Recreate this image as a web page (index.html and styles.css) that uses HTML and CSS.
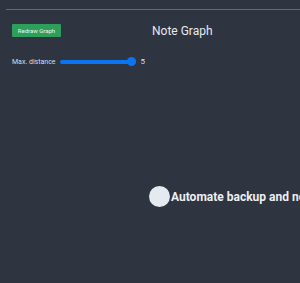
FILE: index.html
```html
<!DOCTYPE html>
<html>
<head>
<meta charset="utf-8">
<link rel="stylesheet" href="styles.css">
</head>
<body>
<div class="rule"></div>
<div class="header">
  <button class="redraw">Redraw Graph</button>
  <h1 class="title">Note Graph</h1>
</div>
<div class="controls">
  <label class="label">Max. distance</label>
  <div class="slider"><div class="track"></div><div class="thumb"></div></div>
  <span class="value">5</span>
</div>
<div class="canvas">
  <div class="node">
    <div class="dot"></div>
    <span class="node-label">Automate backup and notes sync</span>
  </div>
</div>
</body>
</html>
```
FILE: styles.css
```css
html, body {
  margin: 0;
  padding: 0;
  background: #2e3440;
  height: 283px;
  overflow: hidden;
  font-family: Roboto, "Noto Sans", sans-serif;
  color: #e5e9f0;
}
body { position: relative; }
.rule {
  margin: 9px 0 0 6px;
  height: 1px;
  background: #5d6b82;
}
.header {
  display: flex;
  align-items: center;
  padding: 14px 0 0 12px;
  height: 13px;
}
.redraw {
  background: #2e9e5b;
  color: #f0f4f0;
  border: 0;
  border-radius: 1px;
  font-family: Roboto, sans-serif;
  font-size: 6px;
  width: 49px;
  height: 13px;
  padding: 0;
  margin: 0;
}
.title {
  margin: 0 0 0 91px;
  font-size: 12px;
  font-weight: 400;
  color: #e5e9f0;
}
.controls {
  display: flex;
  align-items: center;
  padding: 20px 0 0 12px;
  font-size: 7px;
}
.label { color: #d8dee9; }
.slider {
  position: relative;
  width: 76px;
  height: 8px;
  margin-left: 4px;
}
.track {
  position: absolute;
  left: 0; right: 0; top: 2px;
  height: 4px;
  border-radius: 2px;
  background: #0b74f0;
}
.thumb {
  position: absolute;
  right: 0; top: -0.5px;
  width: 9px; height: 9px;
  border-radius: 50%;
  background: #0b74f0;
}
.value { margin-left: 5px; color: #d8dee9; font-size: 8px; }
.canvas {
  position: absolute;
  left: 0; top: 0; right: 0; bottom: 0;
}
.node {
  position: absolute;
  left: 149px;
  top: 186px;
  display: flex;
  align-items: center;
  white-space: nowrap;
}
.dot {
  width: 21px; height: 21px;
  border-radius: 50%;
  background: #e5e9f0;
}
.node-label {
  margin-left: 1px;
  font-size: 12px;
  font-weight: 700;
  color: #eceff4;
}
```
